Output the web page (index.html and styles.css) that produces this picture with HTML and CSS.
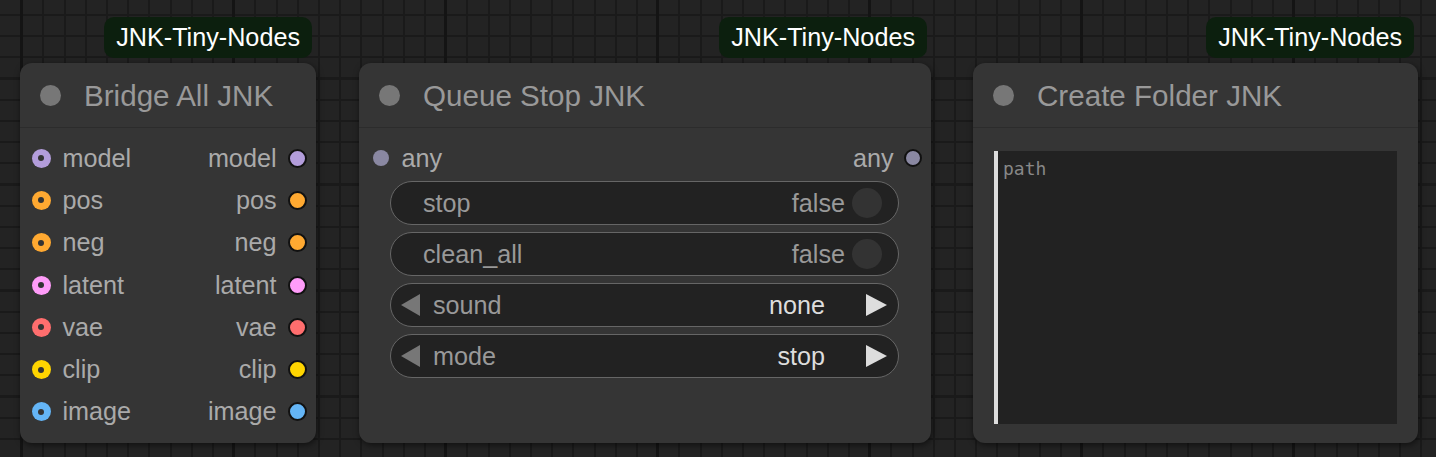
FILE: index.html
```html
<!DOCTYPE html>
<html>
<head>
<meta charset="utf-8">
<link rel="stylesheet" href="styles.css">
</head>
<body>
<div class="canvas">
  <div class="node node-bridge">
    <div class="badge">JNK-Tiny-Nodes</div>
    <div class="title"><span class="title-dot"></span><span class="title-text">Bridge All JNK</span></div>
    <div class="body slots">
      <div class="slot-row"><div class="in"><span class="dot c-model"></span>model</div><div class="out">model<span class="dot c-model"></span></div></div>
      <div class="slot-row"><div class="in"><span class="dot c-cond"></span>pos</div><div class="out">pos<span class="dot c-cond"></span></div></div>
      <div class="slot-row"><div class="in"><span class="dot c-cond"></span>neg</div><div class="out">neg<span class="dot c-cond"></span></div></div>
      <div class="slot-row"><div class="in"><span class="dot c-latent"></span>latent</div><div class="out">latent<span class="dot c-latent"></span></div></div>
      <div class="slot-row"><div class="in"><span class="dot c-vae"></span>vae</div><div class="out">vae<span class="dot c-vae"></span></div></div>
      <div class="slot-row"><div class="in"><span class="dot c-clip"></span>clip</div><div class="out">clip<span class="dot c-clip"></span></div></div>
      <div class="slot-row"><div class="in"><span class="dot c-image"></span>image</div><div class="out">image<span class="dot c-image"></span></div></div>
    </div>
  </div>

  <div class="node node-queue">
    <div class="badge">JNK-Tiny-Nodes</div>
    <div class="title"><span class="title-dot"></span><span class="title-text">Queue Stop JNK</span></div>
    <div class="body queue-body">
      <div class="slot-row any-row"><div class="in"><span class="dot c-any in-any"></span>any</div><div class="out">any<span class="dot c-any"></span></div></div>
      <div class="widgets">
        <div class="widget toggle"><span class="w-label">stop</span><span class="w-value">false</span><span class="knob"></span></div>
        <div class="widget toggle"><span class="w-label">clean_all</span><span class="w-value">false</span><span class="knob"></span></div>
        <div class="widget combo"><span class="arrow left"></span><span class="w-label">sound</span><span class="c-value">none</span><span class="arrow right"></span></div>
        <div class="widget combo"><span class="arrow left"></span><span class="w-label">mode</span><span class="c-value">stop</span><span class="arrow right"></span></div>
      </div>
    </div>
  </div>

  <div class="node node-folder">
    <div class="badge">JNK-Tiny-Nodes</div>
    <div class="title"><span class="title-dot"></span><span class="title-text">Create Folder JNK</span></div>
    <div class="body folder-body">
      <div class="textarea"><span class="placeholder">path</span></div>
    </div>
  </div>
</div>
</body>
</html>
```

FILE: styles.css
```css
html, body {
  margin: 0;
  padding: 0;
}
body {
  width: 1436px;
  height: 457px;
  overflow: hidden;
  font-family: "Liberation Sans", Arial, sans-serif;
  background-color: #232323;
  background-image:
    repeating-linear-gradient(90deg, transparent 0, transparent 20px, #141414 20px, #141414 23px, transparent 23px, transparent 212px),
    repeating-linear-gradient(0deg, transparent 0, transparent 19px, #1a1a1a 19px, #1a1a1a 21.2px),
    repeating-linear-gradient(90deg, transparent 0, transparent 19.2px, #1a1a1a 19.2px, #1a1a1a 21.2px);
  background-position: 0 0, 0 2px, 2px 0;
}
.canvas {
  position: relative;
  width: 1436px;
  height: 457px;
}
.node {
  position: absolute;
  top: 63px;
  height: 380px;
  background: #353535;
  border-radius: 12px;
  box-shadow: 1px 2px 6px rgba(0, 0, 0, 0.55);
  display: flex;
  flex-direction: column;
}
.node-bridge { left: 20px; width: 296px; }
.node-queue { left: 359px; width: 572px; }
.node-folder { left: 973px; width: 445px; }

.badge {
  position: absolute;
  right: 4px;
  bottom: calc(100% + 5px);
  height: 41px;
  line-height: 41px;
  padding: 0 12px;
  background: #0c1f0e;
  border-radius: 10px;
  color: #ffffff;
  font-size: 25.2px;
  white-space: nowrap;
}
.title {
  height: 64px;
  flex: none;
  display: flex;
  align-items: center;
  padding-left: 20px;
  border-bottom: 1px solid #2c2c2c;
}
.title-dot {
  width: 21px;
  height: 21px;
  border-radius: 50%;
  background: #777;
  margin-right: 23px;
  flex: none;
}
.title-text {
  color: #999;
  font-size: 29.6px;
  line-height: 1;
  position: relative;
  top: 1px;
}
.body {
  flex: 1;
}
.slots {
  padding-top: 9px;
}
.slot-row {
  height: 42.3px;
  display: flex;
  justify-content: space-between;
  align-items: center;
  font-size: 25.2px;
  color: #aaa;
}
.in, .out {
  display: flex;
  align-items: center;
}
.in { padding-left: 11.5px; }
.out { padding-right: 9.5px; }
.in .dot { margin-right: 12px; }
.out .dot { margin-left: 11px; }
.dot {
  width: 19px;
  height: 19px;
  border-radius: 50%;
  box-sizing: border-box;
  position: relative;
  flex: none;
}
.in .dot::after {
  content: "";
  position: absolute;
  left: 50%;
  top: 50%;
  width: 6px;
  height: 6px;
  margin: -3px 0 0 -3px;
  border-radius: 50%;
  background: #333;
}
.out .dot {
  border: 2px solid #111;
}
.c-model { background: #b39ddb; }
.c-cond { background: #ffa931; }
.c-latent { background: #ff9cf9; }
.c-vae { background: #ff6e6e; }
.c-clip { background: #ffd500; }
.c-image { background: #64b5f6; }
.c-any { background: #8a88a2; }
.in .in-any {
  width: 16px;
  height: 16px;
  margin-left: 2px;
  margin-right: 13px;
}
.in .in-any::after { display: none; }
.out .c-any {
  width: 18px;
  height: 18px;
  margin-left: 10px;
}
.queue-body {
  padding-top: 9px;
  display: flex;
  flex-direction: column;
}
.widgets {
  display: flex;
  flex-direction: column;
  gap: 7px;
  padding: 2px 32px 0 31px;
}
.widget {
  height: 44px;
  box-sizing: border-box;
  border: 1.5px solid #666;
  border-radius: 22px;
  background: #222;
  display: flex;
  align-items: center;
  font-size: 25.2px;
}
.toggle {
  padding: 0 16px 0 32px;
}
.w-label {
  color: #999;
  flex: 1;
}
.w-value {
  color: #999;
  margin-right: 7px;
}
.knob {
  width: 30px;
  height: 30px;
  border-radius: 50%;
  background: #333;
}
.combo {
  padding: 0 11px 0 10px;
}
.combo .w-label {
  margin-left: 13px;
}
.c-value {
  color: #ddd;
  margin-right: 41px;
}
.arrow {
  width: 0;
  height: 0;
  border-top: 11px solid transparent;
  border-bottom: 11px solid transparent;
}
.arrow.left {
  border-right: 19px solid #777;
}
.arrow.right {
  border-left: 21px solid #ddd;
}
.folder-body {
  padding: 23px 21px 19px 21px;
  display: flex;
}
.textarea {
  flex: 1;
  background: #222;
  border-left: 4px solid #ddd;
  padding: 7px 5px;
}
.placeholder {
  font-family: "DejaVu Sans Mono", monospace;
  font-size: 18px;
  color: #888;
}
```
